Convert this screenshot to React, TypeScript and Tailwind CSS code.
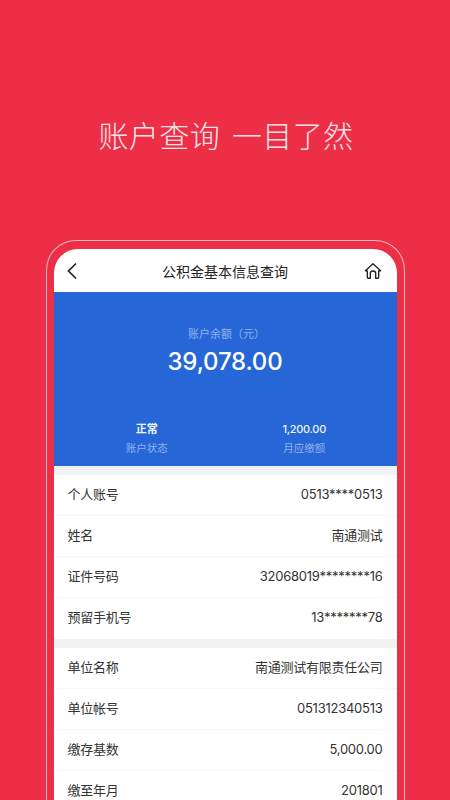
import React from 'react';

const font = { sans: 'font-["Inter","Noto_Sans_CJK_SC",sans-serif]' };

const groupOne = [
  { label: '个人账号', value: '0513****0513' },
  { label: '姓名', value: '南通测试' },
  { label: '证件号码', value: '32068019********16' },
  { label: '预留手机号', value: '13*******78' },
];

const groupTwo = [
  { label: '单位名称', value: '南通测试有限责任公司' },
  { label: '单位帐号', value: '051312340513' },
  { label: '缴存基数', value: '5,000.00' },
  { label: '缴至年月', value: '201801' },
];

const Row: React.FC<{ label: string; value: string; last?: boolean }> = ({ label, value, last }) => (
  <div className={`h-[41px] shrink-0 pl-[14px] pr-[14px] flex items-center justify-between text-[13px] tracking-[-0.25px] text-[#333333] ${last ? '' : 'border-b border-[#f8f8f8]'}`}>
    <span>{label}</span>
    <span>{value}</span>
  </div>
);

const App: React.FC = () => {
  return (
    <div className={`w-[450px] h-[800px] overflow-hidden bg-[#ec2f47] flex flex-col items-center ${font.sans}`}>
      <h1 className="mt-[117px] pl-[2px] h-[38px] leading-[38px] text-[30px] font-light tracking-[0.4px] [word-spacing:3px] text-[#fbe4e7] whitespace-nowrap">账户查询 一目了然</h1>

      <div className="mt-[85px] w-[359px] flex-1 min-h-0 rounded-t-[30px] border-t-[1.5px] border-x-[1.5px] border-[#f6b5be] pt-[7.5px] px-[7px]">
        <div className="h-full rounded-t-[24px] overflow-hidden bg-white flex flex-col">
          <div className="h-[43px] shrink-0 pl-[8px] pr-[15px] flex items-center justify-between">
            <svg width="20" height="20" viewBox="0 0 20 20" fill="none" stroke="#222222" strokeWidth="1.7" className="mt-[2px]">
              <path d="M14 2.5 L6.5 10 L14 17.5" />
            </svg>
            <span className="mt-[2px] pl-[5px] text-[14px] text-[#222222]">公积金基本信息查询</span>
            <svg width="18" height="18" viewBox="0 0 20 20" fill="none" stroke="#222222" strokeWidth="1.5" strokeLinejoin="round" className="mt-[2px]">
              <path d="M1.5 9.8 L10 2 L18.5 9.8 H16.3 V17 Q16.3 18 15.3 18 H13 V12.5 Q13 10 10 10 Q7 10 7 12.5 V18 H4.7 Q3.7 18 3.7 17 V9.8 Z" />
            </svg>
          </div>

          <div className="h-[174px] shrink-0 bg-[#2766d6] flex flex-col items-center">
            <div className="mt-[33px] pl-[3px] h-[18px] leading-[18px] text-[11px] text-[#8fb2ee]">账户余额（元）</div>
            <div className="mt-[1px] h-[36px] leading-[36px] text-[24px] font-medium tracking-[-0.2px] text-white">39,078.00</div>
            <div className="mt-[40px] w-full grid grid-cols-2 text-center">
              <div className="pl-[15px]">
                <div className="h-[19px] leading-[19px] text-[11px] font-bold text-[#eef3fc]">正常</div>
                <div className="h-[19px] leading-[19px] text-[10.5px] text-[#8fb2ee]">账户状态</div>
              </div>
              <div className="pr-[13px]">
                <div className="h-[19px] leading-[19px] text-[11px] font-medium tracking-[-0.3px] text-[#eef3fc]">1,200.00</div>
                <div className="h-[19px] leading-[19px] text-[10.5px] text-[#8fb2ee]">月应缴额</div>
              </div>
            </div>
          </div>

          <div className="h-[9px] shrink-0 bg-[#f1f2f2]" />
          {groupOne.map((r, i) => (
            <Row key={r.label} label={r.label} value={r.value} last={i === groupOne.length - 1} />
          ))}
          <div className="h-[9px] shrink-0 bg-[#f1f2f2]" />
          {groupTwo.map((r, i) => (
            <Row key={r.label} label={r.label} value={r.value} last={i === groupTwo.length - 1} />
          ))}
        </div>
      </div>
    </div>
  );
};

export default App;
